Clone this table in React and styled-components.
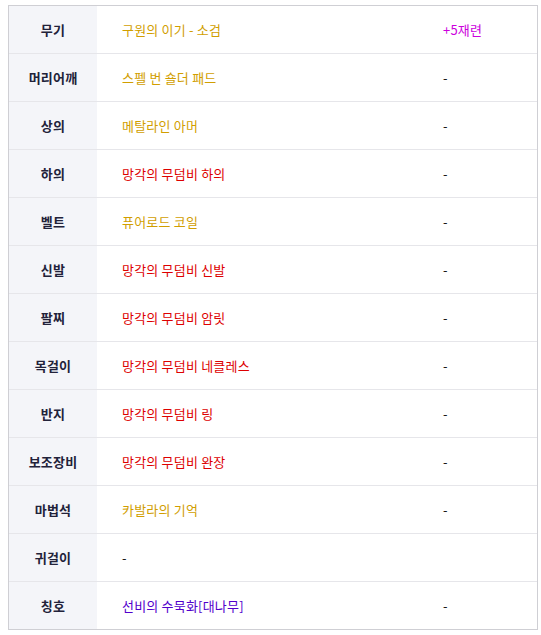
import React from 'react'
import styled, { createGlobalStyle } from 'styled-components'

const GlobalStyle = createGlobalStyle`
  html, body {
    margin: 0;
    padding: 0;
    background: #fff;
  }
  body {
    font-family: "Noto Sans CJK KR", "Noto Sans", sans-serif;
    font-size: 13px;
  }
`

const Page = styled.div`
  padding: 5px 4px 0 8px;
`

const Table = styled.div`
  width: 530px;
  box-sizing: border-box;
  border: 1px solid #cfcfd4;
  display: grid;
  grid-template-columns: 88px 322px 1fr;
`

const Row = styled.div`
  display: contents;
`

const Cell = styled.div`
  height: 47px;
  display: flex;
  align-items: center;
  border-bottom: ${p => (p.$last ? 'none' : '1px solid #e6e6ea')};
  white-space: nowrap;
  letter-spacing: 0.2px;
`

const Head = styled(Cell)`
  justify-content: center;
  background: #f4f5f9;
  font-weight: bold;
  color: #22223a;
`

const Item = styled(Cell)`
  padding-left: 25px;
  color: ${p => p.$color || '#111'};
`

const Extra = styled(Cell)`
  padding-left: 24px;
  color: ${p => p.$color || '#111'};
`

const GOLD = '#d19e00'
const RED = '#dd0000'
const MAGENTA = '#cc00dd'
const PURPLE = '#5200cc'

const rows = [
  { slot: '무기', name: '구원의 이기 - 소검', color: GOLD, extra: '+5재련', extraColor: MAGENTA },
  { slot: '머리어깨', name: '스펠 번 숄더 패드', color: GOLD, extra: '-' },
  { slot: '상의', name: '메탈라인 아머', color: GOLD, extra: '-' },
  { slot: '하의', name: '망각의 무덤비 하의', color: RED, extra: '-' },
  { slot: '벨트', name: '퓨어로드 코일', color: GOLD, extra: '-' },
  { slot: '신발', name: '망각의 무덤비 신발', color: RED, extra: '-' },
  { slot: '팔찌', name: '망각의 무덤비 암릿', color: RED, extra: '-' },
  { slot: '목걸이', name: '망각의 무덤비 네클레스', color: RED, extra: '-' },
  { slot: '반지', name: '망각의 무덤비 링', color: RED, extra: '-' },
  { slot: '보조장비', name: '망각의 무덤비 완장', color: RED, extra: '-' },
  { slot: '마법석', name: '카발라의 기억', color: GOLD, extra: '-' },
  { slot: '귀걸이', name: '-', extra: '' },
  { slot: '칭호', name: '선비의 수묵화[대나무]', color: PURPLE, extra: '-' },
]

export default function App() {
  return (
    <Page>
      <GlobalStyle />
      <Table>
        {rows.map((r, i) => {
          const last = i === rows.length - 1
          return (
            <Row key={r.slot}>
              <Head $last={last}>{r.slot}</Head>
              <Item $last={last} $color={r.color}>{r.name}</Item>
              <Extra $last={last} $color={r.extraColor}>{r.extra}</Extra>
            </Row>
          )
        })}
      </Table>
    </Page>
  )
}
